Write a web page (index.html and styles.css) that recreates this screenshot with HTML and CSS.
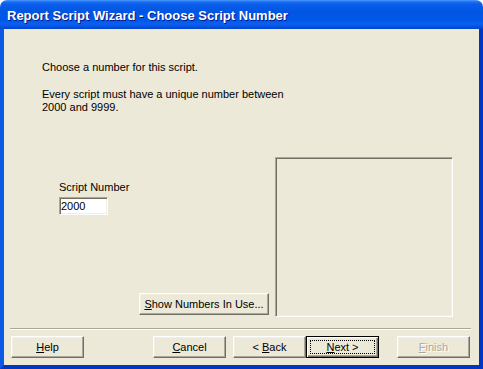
FILE: index.html
```html
<!DOCTYPE html>
<html lang="en">
<head>
    <meta charset="UTF-8">
    <title>Report Script Wizard</title>
    <link rel="stylesheet" href="styles.css">
</head>
<body>

    <div class="window">
        <!-- Title bar -->
        <div class="titlebar">
            <span class="title">Report Script Wizard - Choose Script Number</span>
        </div>

        <div class="frame">
            <div class="page">
                <p class="intro">Choose a number for this script.</p>
                <p class="intro">Every script must have a unique number between<br>2000 and 9999.</p>

                <div class="lower">
                    <div class="field">
                        <label for="scriptNumber">Script Number</label>
                        <input type="text" id="scriptNumber" class="textbox" value="2000">
                        <button class="btn show"><u>S</u>how Numbers In Use...</button>
                    </div>
                    <div class="numbers"></div>
                </div>
            </div>

            <div class="separator"></div>

            <!-- Wizard buttons -->
            <div class="buttons">
                <button class="btn help"><u>H</u>elp</button>
                <button class="btn cancel"><u>C</u>ancel</button>
                <button class="btn back">&lt; <u>B</u>ack</button>
                <button class="btn next default"><span class="focus"><u>N</u>ext &gt;</span></button>
                <button class="btn finish" disabled><u>F</u>inish</button>
            </div>
        </div>
    </div>

</body>
</html>
```

FILE: styles.css
```css
body {
    margin: 0;
    padding: 0;
    background: #ffffff;
    font-family: 'Liberation Sans', Arial, sans-serif;
    font-size: 11px;
    color: #000;
}

.window {
    width: 483px;
    height: 369px;
    display: flex;
    flex-direction: column;
    border-radius: 7px 7px 0 0;
    overflow: hidden;
}

/* Title bar */
.titlebar {
    height: 29px;
    flex: none;
    display: flex;
    align-items: center;
    padding: 1px 0 0 7px;
    box-sizing: border-box;
    background: linear-gradient(to bottom,
        #4a98fb 0px, #1a6ef5 2px, #0a5ee9 4px, #0055e3 12px,
        #0057e8 20px, #0a60ef 24px, #0550dd 27px, #0042c8 29px);
}

.title {
    font-family: 'Liberation Sans', Arial, sans-serif;
    font-weight: bold;
    font-size: 13px;
    color: #fff;
    text-shadow: 1px 1px #0a1883;
}

.frame {
    flex: 1;
    display: flex;
    flex-direction: column;
    background: #ece9d8;
    border-left: 4px solid #0a5ae6;
    border-right: 4px solid #0036c6;
    border-bottom: 4px solid #0037c2;
}

/* Page content */
.page {
    padding: 32px 0 0 38px;
    flex: none;
}

.intro {
    margin: 0 0 14px 0;
    line-height: 13px;
}

.lower {
    display: flex;
    height: 160px;
    margin: 43px 0 0 -38px;
}

.field {
    flex: 1;
    display: flex;
    flex-direction: column;
    align-items: flex-start;
    padding: 24px 0 0 55px;
}

.field label {
    line-height: 13px;
}

.textbox {
    width: 49px;
    height: 18px;
    box-sizing: border-box;
    margin: 3px 0 0 0;
    padding: 0 1px;
    border: 1px solid;
    border-color: #aca899 #ffffff #ffffff #aca899;
    box-shadow: inset 1px 1px #716f64, inset -1px -1px #f1efe2;
    background: #fff;
    font-family: 'Liberation Sans', Arial, sans-serif;
    font-size: 11px;
    color: #000;
    outline: none;
}

.numbers {
    width: 178px;
    height: 160px;
    box-sizing: border-box;
    margin-right: 26px;
    border: 1px solid;
    border-color: #aca899 #ffffff #ffffff #aca899;
    box-shadow: inset 1px 1px #716f64, inset -1px -1px #f1efe2;
}

/* Buttons */
.btn {
    width: 73px;
    height: 22px;
    box-sizing: border-box;
    padding: 0;
    margin: 0;
    background: #ece9d8;
    border: 1px solid;
    border-color: #ffffff #716f64 #716f64 #ffffff;
    box-shadow: inset -1px -1px #aca899, inset 1px 1px #f1efe2;
    font-family: 'Liberation Sans', Arial, sans-serif;
    font-size: 11px;
    color: #000;
    cursor: default;
}

.show {
    width: 130px;
    margin-top: auto;
    margin-bottom: 2px;
    align-self: flex-end;
    margin-right: 6px;
}

.separator {
    height: 1px;
    margin: 11px 8px 0 6px;
    background: #aca899;
    border-bottom: 1px solid #ffffff;
}

.buttons {
    display: flex;
    padding: 6px 0 0 7px;
}

.cancel {
    margin-left: 69px;
}

.back {
    margin-left: 7px;
}

.default {
    border: 1px solid #000;
    box-shadow: inset 1px 1px #ffffff, inset -1px -1px #716f64, inset -2px -2px #aca899;
    padding: 3px;
}

.focus {
    display: block;
    height: 100%;
    box-sizing: border-box;
    border: 1px dotted #000;
    line-height: 12px;
}

.finish {
    margin-left: 18px;
    color: #aca899;
    text-shadow: 1px 1px #ffffff;
}
```
